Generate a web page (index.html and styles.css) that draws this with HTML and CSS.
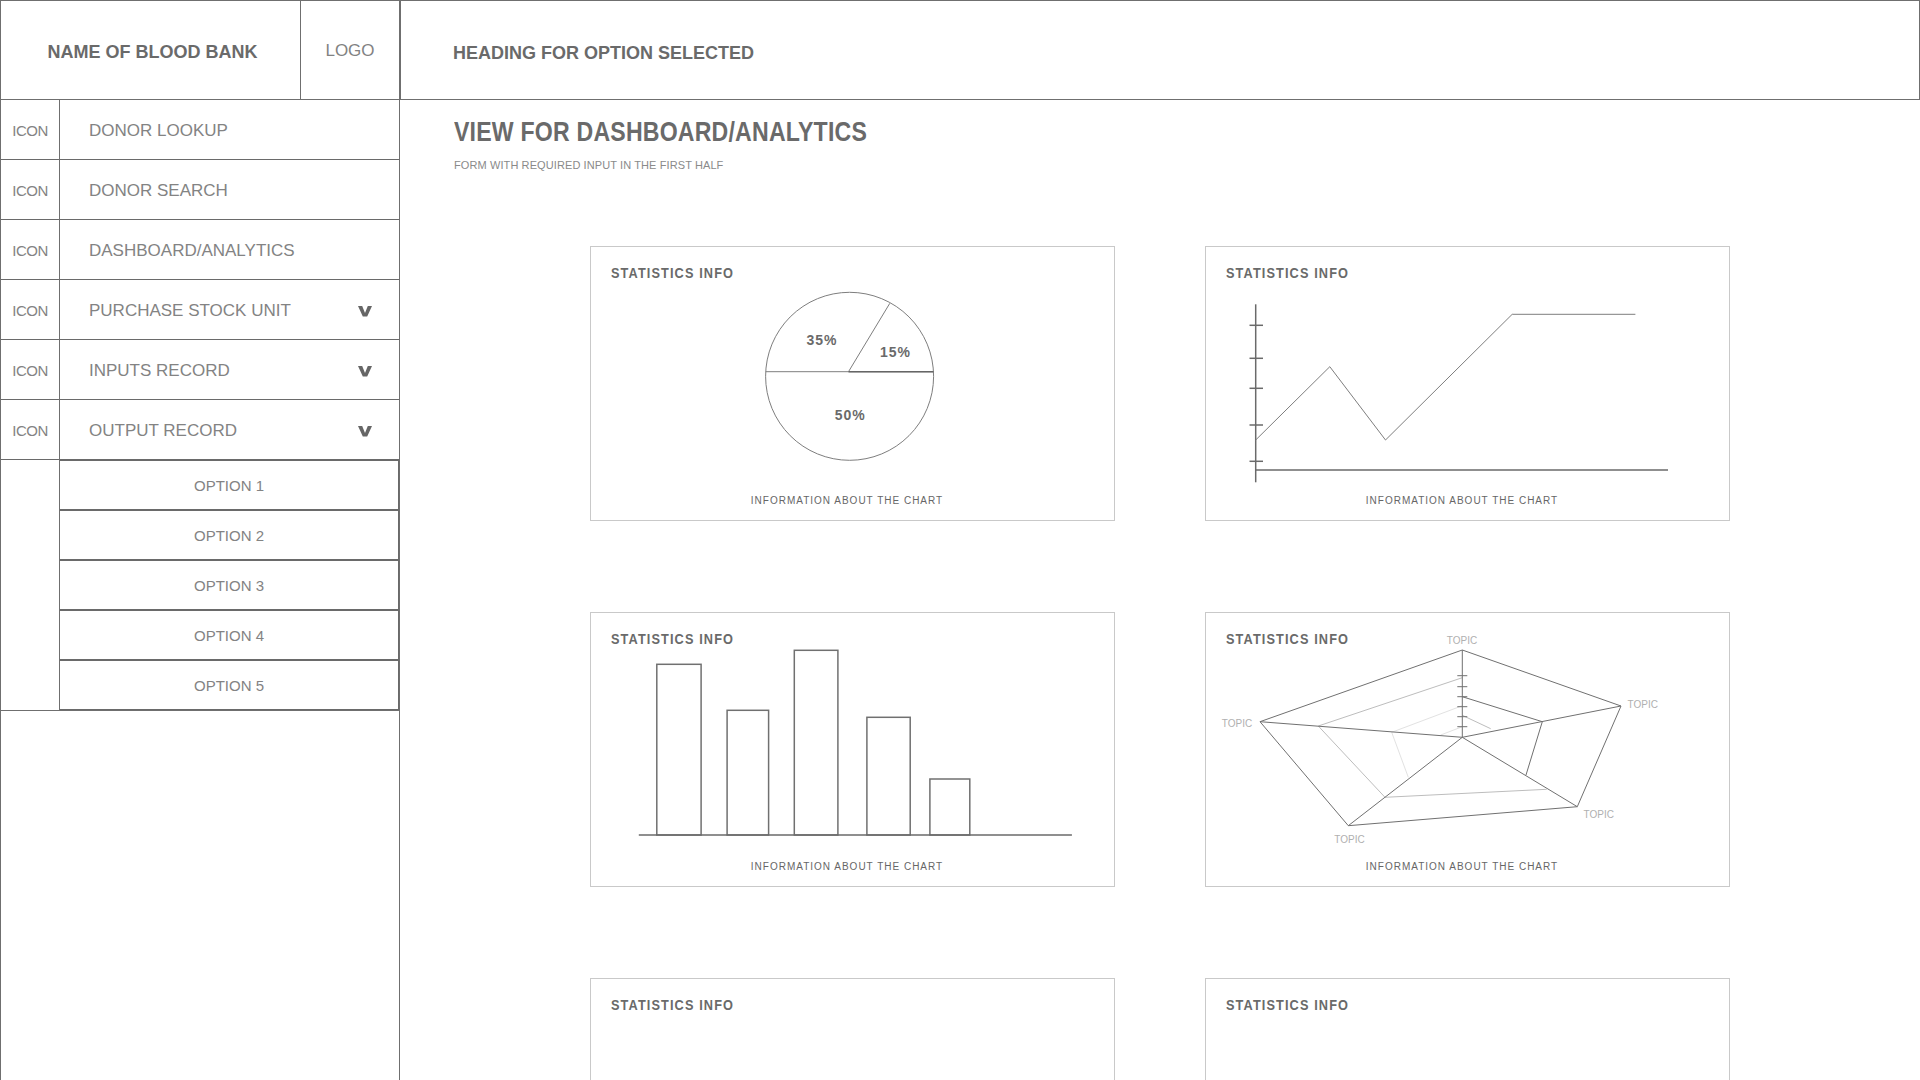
FILE: index.html
```html
<!DOCTYPE html>
<html lang="en">
<head>
<meta charset="utf-8">
<title>Blood Bank Dashboard</title>
<link rel="stylesheet" href="styles.css">
</head>
<body>
<div class="app">
  <div class="brand">
    <div class="brand-name">NAME OF BLOOD BANK</div>
    <div class="brand-logo">LOGO</div>
  </div>
  <header class="topbar">
    <h1 class="topbar-title">HEADING FOR OPTION SELECTED</h1>
  </header>

  <nav class="sidebar">
    <div class="nav-item"><span class="nav-icon">ICON</span><span class="nav-label">DONOR LOOKUP</span></div>
    <div class="nav-item"><span class="nav-icon">ICON</span><span class="nav-label">DONOR SEARCH</span></div>
    <div class="nav-item"><span class="nav-icon">ICON</span><span class="nav-label">DASHBOARD/ANALYTICS</span></div>
    <div class="nav-item"><span class="nav-icon">ICON</span><span class="nav-label">PURCHASE STOCK UNIT</span>
      <svg class="chev" viewBox="0 0 14 11"><polygon points="0,0 4.2,0 7,7 9.8,0 14,0 9.2,10.6 4.8,10.6"/></svg></div>
    <div class="nav-item"><span class="nav-icon">ICON</span><span class="nav-label">INPUTS RECORD</span>
      <svg class="chev" viewBox="0 0 14 11"><polygon points="0,0 4.2,0 7,7 9.8,0 14,0 9.2,10.6 4.8,10.6"/></svg></div>
    <div class="nav-item"><span class="nav-icon">ICON</span><span class="nav-label">OUTPUT RECORD</span>
      <svg class="chev" viewBox="0 0 14 11"><polygon points="0,0 4.2,0 7,7 9.8,0 14,0 9.2,10.6 4.8,10.6"/></svg></div>
    <div class="submenu">
      <div class="sub-gutter"></div>
      <div class="sub-list">
        <div class="sub-item">OPTION 1</div>
        <div class="sub-item">OPTION 2</div>
        <div class="sub-item">OPTION 3</div>
        <div class="sub-item">OPTION 4</div>
        <div class="sub-item">OPTION 5</div>
      </div>
    </div>
  </nav>

  <main class="main">
    <div class="view-head">
      <h2 class="view-title">VIEW FOR DASHBOARD/ANALYTICS</h2>
      <p class="view-sub">FORM WITH REQUIRED INPUT IN THE FIRST HALF</p>
    </div>

    <section class="grid">
      <div class="card">
        <svg class="chart" viewBox="1 1 523 273">
          <circle cx="259.6" cy="130.3" r="84" class="ln-soft"/>
          <line x1="175.7" y1="125.7" x2="343.5" y2="125.7" class="ln-soft"/>
          <line x1="258.5" y1="125.7" x2="343.5" y2="125.7" class="ln-dark"/>
          <line x1="258.5" y1="125.7" x2="299.8" y2="57.3" class="ln-soft"/>
          <text x="232" y="99" class="pie-lbl">35%</text>
          <text x="305.5" y="111" class="pie-lbl">15%</text>
          <text x="260.2" y="174" class="pie-lbl">50%</text>
        </svg>
        <h3 class="card-title">STATISTICS INFO</h3>
        <p class="card-cap">INFORMATION ABOUT THE CHART</p>
      </div>

      <div class="card">
        <svg class="chart" viewBox="1 1 523 273">
          <line x1="50.7" y1="58.3" x2="50.7" y2="236.3" class="axis"/>
          <line x1="50.7" y1="224" x2="463" y2="224" class="axis"/>
          <line x1="44.5" y1="79.3" x2="58" y2="79.3" class="axis"/>
          <line x1="44.5" y1="112.3" x2="58" y2="112.3" class="axis"/>
          <line x1="44.5" y1="142.3" x2="58" y2="142.3" class="axis"/>
          <line x1="44.5" y1="179" x2="58" y2="179" class="axis"/>
          <line x1="44.5" y1="215.3" x2="58" y2="215.3" class="axis"/>
          <polyline points="50.7,194 124.8,120.7 180.5,194 307.2,68.3 430.4,68.3" class="ln-soft"/>
        </svg>
        <h3 class="card-title">STATISTICS INFO</h3>
        <p class="card-cap">INFORMATION ABOUT THE CHART</p>
      </div>

      <div class="card">
        <svg class="chart" viewBox="1 1 523 273">
          <rect x="66.8" y="52.3" width="44.3" height="170.7" class="bar"/>
          <rect x="137.1" y="98.3" width="41.5" height="124.7" class="bar"/>
          <rect x="204.3" y="38.3" width="43.6" height="184.7" class="bar"/>
          <rect x="276.9" y="105.3" width="43.3" height="117.7" class="bar"/>
          <rect x="339.9" y="167" width="39.9" height="56" class="bar"/>
          <line x1="48.8" y1="223" x2="481.9" y2="223" class="axis"/>
        </svg>
        <h3 class="card-title">STATISTICS INFO</h3>
        <p class="card-cap">INFORMATION ABOUT THE CHART</p>
      </div>

      <div class="card">
        <svg class="chart" viewBox="1 1 523 273">
          <polyline points="257.3,93.7 186.7,120.3 203.3,165.3" class="rd-faint"/>
          <line x1="235.7" y1="123" x2="257.3" y2="114.7" class="rd-faint"/>
          <line x1="257.3" y1="103.3" x2="285.7" y2="116.7" class="rd-light"/>
          <polyline points="257.3,65.7 113.3,114 180,185.3 341.7,177.3" class="rd-light"/>
          <polygon points="257.3,38 416,94 372.3,194.7 143.3,213.7 55,109.7" class="rd-dark"/>
          <line x1="257.3" y1="125.3" x2="55" y2="109.7" class="rd-dark"/>
          <line x1="257.3" y1="125.3" x2="143.3" y2="213.7" class="rd-dark"/>
          <line x1="257.3" y1="125.3" x2="372.3" y2="194.7" class="rd-dark"/>
          <line x1="257.3" y1="125.3" x2="416" y2="94" class="rd-dark"/>
          <line x1="257.3" y1="125.3" x2="257.3" y2="38" class="rd-dark"/>
          <polyline points="257.3,84.7 337.3,109.7 321,163" class="rd-dark"/>
          <line x1="252.3" y1="63.7" x2="262.3" y2="63.7" class="rd-dark"/>
          <line x1="252.3" y1="74.7" x2="262.3" y2="74.7" class="rd-dark"/>
          <line x1="252.3" y1="84.7" x2="262.3" y2="84.7" class="rd-dark"/>
          <line x1="252.3" y1="94.7" x2="262.3" y2="94.7" class="rd-dark"/>
          <line x1="252.3" y1="104.7" x2="262.3" y2="104.7" class="rd-dark"/>
          <line x1="252.3" y1="114.7" x2="262.3" y2="114.7" class="rd-dark"/>
          <text x="257" y="32" class="topic mid">TOPIC</text>
          <text x="422.5" y="96.3" class="topic">TOPIC</text>
          <text x="378.5" y="206.3" class="topic">TOPIC</text>
          <text x="129.3" y="231.3" class="topic">TOPIC</text>
          <text x="16.8" y="115.3" class="topic">TOPIC</text>
        </svg>
        <h3 class="card-title">STATISTICS INFO</h3>
        <p class="card-cap">INFORMATION ABOUT THE CHART</p>
      </div>

      <div class="card">
        <h3 class="card-title">STATISTICS INFO</h3>
      </div>

      <div class="card">
        <h3 class="card-title">STATISTICS INFO</h3>
      </div>
    </section>
  </main>
</div>
</body>
</html>
```

FILE: styles.css
```css
html, body {
  margin: 0;
  padding: 0;
  background: #ffffff;
}

body {
  font-family: "Liberation Sans", Arial, sans-serif;
  color: #6d6d6d;
}

.app {
  display: grid;
  grid-template-columns: 400px 1fr;
  grid-template-rows: 100px 1fr;
  height: 100vh;
  overflow: hidden;
}

/* ---------- header ---------- */
.brand {
  display: flex;
  border: 1px solid #6f6f6f;
}

.brand-name {
  width: 299px;
  display: flex;
  align-items: center;
  justify-content: center;
  padding: 4px 0 0 4px;
  box-sizing: border-box;
  font-size: 18px;
  font-weight: bold;
  color: #6a6a6a;
}

.brand-logo {
  flex: 1;
  border-left: 1px solid #6f6f6f;
  display: flex;
  align-items: center;
  justify-content: center;
  padding-top: 2px;
  font-size: 17px;
  color: #828282;
}

.topbar {
  border: 1px solid #6f6f6f;
  display: flex;
  align-items: center;
  padding: 5px 0 0 52px;
}

.topbar-title {
  margin: 0;
  font-size: 18px;
  line-height: 20px;
  font-weight: bold;
  color: #6a6a6a;
}

/* ---------- sidebar ---------- */
.sidebar {
  border-left: 1px solid #6f6f6f;
  border-right: 1px solid #6f6f6f;
  border-bottom: 1px solid #6f6f6f;
  display: flex;
  flex-direction: column;
}

.nav-item {
  height: 60px;
  box-sizing: border-box;
  border-bottom: 1px solid #6a6a6a;
  display: flex;
  align-items: center;
}

.nav-icon {
  width: 58px;
  height: 100%;
  border-right: 1px solid #6f6f6f;
  display: flex;
  align-items: center;
  justify-content: center;
  padding-top: 2px;
  box-sizing: content-box;
  font-size: 15px;
  letter-spacing: -0.5px;
  color: #838383;
}

.nav-label {
  flex: 1;
  padding: 2px 0 0 29px;
  font-size: 17px;
  color: #838383;
}

.chev {
  width: 14px;
  height: 11px;
  margin: 3px 27px 0 0;
  fill: #666666;
}

.submenu {
  display: flex;
  border-bottom: 1px solid #6f6f6f;
}

.sub-gutter {
  width: 58px;
  border-right: 1px solid #6f6f6f;
}

.sub-list {
  flex: 1;
  border-top: 1px solid #6a6a6a;
  border-right: 1px solid #6a6a6a;
}

.sub-item {
  height: 50px;
  box-sizing: border-box;
  border-bottom: 2px solid #6a6a6a;
  display: flex;
  align-items: center;
  justify-content: center;
  font-size: 15px;
  color: #838383;
}

.sub-item:last-child {
  border-bottom-width: 1px;
  height: 49px;
}

/* ---------- main ---------- */
.main {
  min-width: 0;
}

.view-head {
  padding: 16px 0 0 54px;
}

.view-title {
  display: inline-block;
  margin: 0;
  font-size: 28px;
  line-height: 32px;
  font-weight: bold;
  letter-spacing: 0.25px;
  color: #6a6a6a;
  transform: scaleX(0.825);
  transform-origin: 0 50%;
  white-space: nowrap;
}

.view-sub {
  margin: 11px 0 0;
  font-size: 11px;
  line-height: 13px;
  letter-spacing: 0.1px;
  color: #8a8a8a;
}

.grid {
  display: grid;
  grid-template-columns: 525px 525px;
  grid-auto-rows: 275px;
  column-gap: 90px;
  row-gap: 91px;
  justify-content: center;
  margin-top: 74px;
}

.card {
  border: 1px solid #c9c9c9;
  display: grid;
  grid-template: 1fr / 1fr;
}

.card > * {
  grid-area: 1 / 1;
}

.chart {
  width: 100%;
  height: 100%;
  display: block;
}

.card-title {
  align-self: start;
  justify-self: start;
  margin: 17px 0 0 20px;
  font-size: 15px;
  line-height: 18px;
  font-weight: bold;
  letter-spacing: 1.3px;
  color: #6a6a6a;
  white-space: nowrap;
  transform: scaleX(0.85);
  transform-origin: 0 0;
  position: relative;
}

.card-cap {
  align-self: end;
  margin: 0;
  padding: 0 11px 13px 0;
  text-align: center;
  font-size: 10px;
  line-height: 12px;
  letter-spacing: 1px;
  color: #666666;
}

/* ---------- chart strokes ---------- */
.ln-soft {
  fill: none;
  stroke: #7e7e7e;
  stroke-width: 1;
}

.ln-dark {
  fill: none;
  stroke: #666666;
  stroke-width: 1.5;
}

.axis {
  fill: none;
  stroke: #6a6a6a;
  stroke-width: 1.5;
}

.bar {
  fill: none;
  stroke: #707070;
  stroke-width: 1.5;
}

.rd-dark {
  fill: none;
  stroke: #707070;
  stroke-width: 1;
}

.rd-light {
  fill: none;
  stroke: #bdbdbd;
  stroke-width: 1;
}

.rd-faint {
  fill: none;
  stroke: #e2e2e2;
  stroke-width: 1;
}

.pie-lbl {
  font-family: "Liberation Sans", Arial, sans-serif;
  font-size: 14px;
  font-weight: bold;
  letter-spacing: 1px;
  fill: #6a6a6a;
  text-anchor: middle;
}

.topic {
  font-family: "Liberation Sans", Arial, sans-serif;
  font-size: 10px;
  fill: #b0b0b0;
}

.topic.mid {
  text-anchor: middle;
}
```
